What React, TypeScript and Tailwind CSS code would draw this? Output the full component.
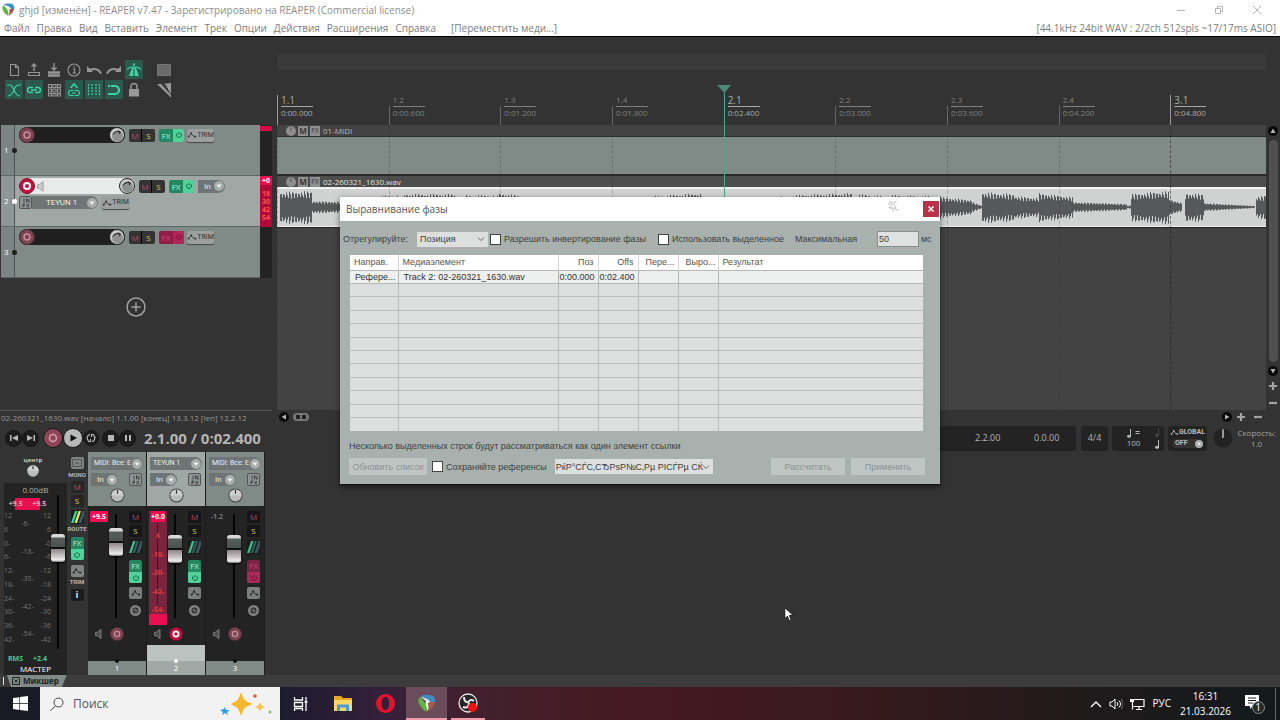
import type { ReactNode } from "react";

const ui = "font-['Open_Sans','Noto_Sans',sans-serif]";

function ReaperLogo({ className }: { className: string }) {
  return (
    <svg viewBox="0 0 20 20" className={className} aria-hidden="true">
      <path d="M2.500 3C5 0 15 0 17.500 3c2 2.500 2 5 1 7L13 8.500C11 5 7 3.500 2.500 3z" fill="#3f8fc4" />
      <path d="M2 3.500C-.5 6 .5 10 2.500 13c2 3 4 5.500 7 6.500L11 15C9 11 6 7 2 3.500z" fill="#5cb83c" />
      <path d="M18.500 9C18 13 15 17.500 10.500 19.500L11.500 9z" fill="#a55a4c" />
      <path d="M2.500 3.200C7 4 11 5 13.500 8.500L10.800 10.500C12 13 12 16 10.500 19 10 14 7.500 11 9 8 7.500 6 5 4.800 2.500 3.200z" fill="#f4f4f2" />
    </svg>
  );
}

const menuItems = ["Файл", "Правка", "Вид", "Вставить", "Элемент", "Трек", "Опции", "Действия", "Расширения", "Справка"];

function TitleBar() {
  return (
    <header className="border-b border-black bg-white text-[#8d8d8d]">
      <div className="flex h-[19px] items-center gap-1 pr-1 pl-[2px]">
        <ReaperLogo className="size-[13px]" />
        <h1 className="flex-1 text-[10px] leading-4 whitespace-nowrap">
          ghjd [изменён] - REAPER v7.47 - Зарегистрировано на REAPER (Commercial license)
        </h1>
        <div className="flex gap-7 pr-[14px] text-[#b5b5b5]">
          <button aria-label="Свернуть">
            <svg viewBox="0 0 10 10" className="size-[10px]" stroke="currentColor"><path d="M1 5.500h8" /></svg>
          </button>
          <button aria-label="Развернуть">
            <svg viewBox="0 0 10 10" className="size-[10px]" stroke="currentColor" fill="none"><path d="M1.500 3.500h5v5h-5zM3.500 3.500v-2h5v5h-2" /></svg>
          </button>
          <button aria-label="Закрыть">
            <svg viewBox="0 0 10 10" className="size-[10px]" stroke="currentColor"><path d="M1 1l8 8M9 1L1 9" /></svg>
          </button>
        </div>
      </div>
      <nav className="flex h-[17px] items-center gap-[7px] px-1 text-[10px] leading-4 whitespace-nowrap text-[#7d7d7d]">
        {menuItems.map((m) => (
          <button key={m}>{m}</button>
        ))}
        <button className="ml-2">[Переместить меди...]</button>
        <span className="ml-auto">[44.1kHz 24bit WAV : 2/2ch 512spls ~17/17ms ASIO]</span>
      </nav>
    </header>
  );
}

type Tool = { label: string; on?: boolean; draw: ReactNode };

const toolRow1: Tool[] = [
  { label: "Новый проект", draw: <path d="M5.500 3.500h5l3 3v8h-8zM10.500 3.500v3h3" /> },
  { label: "Открыть проект", draw: <><path d="M9 10V3M6.500 5.500L9 3l2.500 2.500" strokeWidth="1.400" /><path d="M3.500 11.500h11v3h-11z" /></> },
  { label: "Сохранить проект", draw: <><path d="M9 2v7M6.500 6.500L9 9l2.500-2.500" strokeWidth="1.400" /><path d="M3 11.500h12M3 14.500h12" strokeWidth="2.400" /></> },
  { label: "Свойства", draw: <><circle cx="9" cy="9" r="6" /><path d="M8 8h1.500v4M7.500 12h3.500M9 5v1.500" /></> },
  { label: "Отменить", draw: <><path d="M16 12.500C14 8 9 7 5 9" strokeWidth="2.200" /><path d="M2 5v6h6z" fill="currentColor" stroke="none" /></> },
  { label: "Повторить", draw: <><path d="M2 12.500C4 8 9 7 13 9" strokeWidth="2.200" /><path d="M16 5v6h-6z" fill="currentColor" stroke="none" /></> },
  { label: "Метроном", on: true, draw: <><path d="M2 8.500C5 5 13 5 16 8.500" /><path d="M7 7h4l3 8H4z" fill="currentColor" stroke="none" /><path d="M9 2.500v2" strokeWidth="2" /><path d="M9 8v7" stroke="#2a5a4a" /></> },
];

const toolRow2: Tool[] = [
  { label: "Автокроссфейд", on: true, draw: <path d="M2 4h3c5 1 3 10 10 11M16 4h-3C8 5 10 14 3 15" /> },
  { label: "Группировка", on: true, draw: <path d="M8 6.500H5a2.500 2.500 0 000 5h3M10 6.500h3a2.500 2.500 0 010 5h-3M6 9h6" strokeWidth="1.400" /> },
  { label: "Сетка", draw: <path d="M3.500 3.500h3v3h-3zM8 3.500h3v3H8zM12.500 3.500h3v3h-3zM3.500 8h3v3h-3zM8 8h3v3H8zM12.500 8h3v3h-3zM3.500 12.500h3v2.500h-3zM8 12.500h3v2.500H8zM12.500 12.500h3v2.500h-3z" /> },
  { label: "Огибающие", on: true, draw: <><path d="M5.500 7L9 3l3.500 4" strokeWidth="1.600" /><path d="M8.500 9.500H6a2 2 0 000 5h2.500M9.500 9.500H12a2 2 0 010 5H9.500M7 12h4" /></> },
  { label: "Линии сетки", on: true, draw: <path d="M3.500 3v12M7 3v12M11 3v12M14.500 3v12" strokeDasharray="2 1" /> },
  { label: "Привязка", on: true, draw: <path d="M3 5h7a4 4 0 010 8H3" strokeWidth="2.200" strokeDasharray="2 1 30" /> },
  { label: "Блокировка", draw: <><path d="M4.500 8.500h9v6.500h-9z" fill="currentColor" /><path d="M6 8V5.500a3 3 0 016 0V8" strokeWidth="1.500" /></> },
];

function ToolButton({ tool }: { tool: Tool }) {
  return (
    <button
      aria-label={tool.label}
      className={`flex h-[19px] w-[18px] items-center justify-center ${tool.on ? "bg-[#2b594b] text-[#3fd3a0]" : "text-[#979797]"}`}
    >
      <svg viewBox="0 0 18 18" className="size-[18px]" fill="none" stroke="currentColor" strokeWidth="1.100">{tool.draw}</svg>
    </button>
  );
}

function Toolbar() {
  return (
    <div className="grid h-[88px] content-start gap-px pt-[23px] pl-[5px]">
      <div className="flex gap-[2px]">
        {toolRow1.map((t) => <ToolButton key={t.label} tool={t} />)}
        <button aria-label="Выделение" className="ml-[10px] flex h-[19px] w-[18px] items-center justify-center">
          <svg viewBox="0 0 14 12" className="h-3 w-[14px]"><path d="M.5.5h13v11H.5z" fill="#6a6a6a" stroke="#9a9a9a" strokeDasharray="1 1" /></svg>
        </button>
      </div>
      <div className="flex gap-[2px]">
        {toolRow2.map((t) => <ToolButton key={t.label} tool={t} />)}
        <button aria-label="Фейды" className="ml-[10px] flex h-[19px] w-[18px] items-center justify-center">
          <svg viewBox="0 0 16 16" className="size-4" fill="#9a9a9a"><path d="M1 2h4l10 11v2.500z" /><path d="M7 2h2v1.500l1.500-.5v3l1.500-.5v3l1.500-.5v3L15 11V1z" /></svg>
        </button>
      </div>
    </div>
  );
}

function RecordButton({ armed, size = "size-4" }: { armed?: boolean; size?: string }) {
  return (
    <button aria-label="Запись" className={`${size} shrink-0`}>
      <svg viewBox="0 0 16 16" className="size-full">
        <circle cx="8" cy="8" r="7.500" fill={armed ? "#c4123f" : "#7d4552"} stroke={armed ? "#7c0c2a" : "#4a2f36"} />
        <circle cx="8" cy="8" r="3" fill="none" stroke={armed ? "#fff" : "#c48e99"} strokeWidth={armed ? 2 : 1.500} />
      </svg>
    </button>
  );
}

function Knob({ size = "size-4", dark }: { size?: string; dark?: boolean }) {
  return (
    <button aria-label="Регулятор" className={`${size} shrink-0`}>
      <svg viewBox="0 0 16 16" className="size-full">
        <circle cx="8" cy="8" r="7.500" fill={dark ? "#222" : "#3a3d3c"} />
        {dark ? (
          <path d="M8 1v7" stroke="#ddd" />
        ) : (
          <>
            <circle cx="8" cy="8" r="6.500" fill="#b9bcbb" />
            <path d="M8 1.500a6.500 6.500 0 016.500 6.500h-13A6.500 6.500 0 018 1.500z" fill="#cfd1d0" />
            <path d="M8 2v4" stroke="#333" strokeWidth="1.300" />
          </>
        )}
      </svg>
    </button>
  );
}

function ArcKnob() {
  return (
    <button aria-label="Громкость" className="size-4 shrink-0">
      <svg viewBox="0 0 16 16" className="size-full">
        <circle cx="8" cy="8" r="7.500" fill="#c9cbca" stroke="#222" />
        <circle cx="8.500" cy="9" r="5.500" fill="#8e9190" />
        <path d="M4 7.500C5 5 8 4 11 5M9 3.800l2.500 1.200L10 7" stroke="#1f1f1f" fill="none" />
      </svg>
    </button>
  );
}

function MuteSolo() {
  return (
    <div className="flex h-[13px] overflow-hidden rounded-[2px] bg-[#333] text-[8px] leading-[13px]">
      <button aria-label="Mute" className="w-[13px] border-r border-black text-[#b05068]">M</button>
      <button aria-label="Solo" className="w-[13px] text-[#cfd060]">S</button>
    </div>
  );
}

function FxPair({ off }: { off?: boolean }) {
  return (
    <div className={`flex h-[13px] overflow-hidden rounded-[2px] text-[8px] leading-[13px] ${off ? "bg-[#8f1f49] text-[#d04a78]" : "bg-[#23875f] text-[#bdf0d8]"}`}>
      <button className="w-[14px]">FX</button>
      <button aria-label="Питание FX" className={`flex w-[11px] items-center justify-center ${off ? "bg-[#b32458]" : "bg-[#4fd39a]"}`}>
        <PowerIcon off={off} />
      </button>
    </div>
  );
}

function PowerIcon({ off }: { off?: boolean }) {
  return (
    <svg viewBox="0 0 8 8" className="size-2" fill="none" stroke={off ? "#7a1038" : "#146a46"}>
      <path d="M2.200 2.200a2.500 2.500 0 103.600 0M4 1v2.500" />
    </svg>
  );
}

function EnvelopeGlyph({ className }: { className: string }) {
  return (
    <svg viewBox="0 0 12 8" className={className} fill="none" stroke="currentColor">
      <path d="M2 6l3-4 2 3 3 1" />
      <path d="M1 5h2v2H1zM4 1h2v2H4zM9 5h2v2H9z" fill="currentColor" stroke="none" />
    </svg>
  );
}

function TrimButton() {
  return (
    <button className="flex h-[13px] w-[27px] items-center justify-center rounded-[2px] bg-[#9b9f9e] font-['Roboto',sans-serif] text-[7px] leading-[13px] text-[#333] shadow-[0_1px_1px_#444]">
      <EnvelopeGlyph className="h-2 w-[10px] shrink-0" />
      TRIM
    </button>
  );
}

function Chevron({ size = "size-[10px]" }: { size?: string }) {
  return (
    <svg viewBox="0 0 10 10" className={`${size} shrink-0`}>
      <circle cx="5" cy="5" r="5" fill="#a9adac" />
      <path d="M2.500 3.500h5L5 7z" fill="#f3f3f3" />
    </svg>
  );
}

function InFxButton() {
  return (
    <button aria-label="Входные FX" className="grid size-[13px] shrink-0 place-items-center rounded-[2px] border border-[#555] bg-[#8f9594] text-[#333]">
      <svg viewBox="0 0 10 10" className="size-[10px]" fill="none" stroke="currentColor" strokeWidth=".8">
        <path d="M3 .5v4M5.500 4.500v-4l2.500 4v-4M2 9.500V6h2M2 7.500h2M5.500 6l2.500 3.500M8 6L5.500 9.500" />
      </svg>
    </button>
  );
}

function PillSelect({ text, className }: { text: string; className: string }) {
  return (
    <button className={`flex h-[13px] items-center justify-between rounded-l-[2px] rounded-r-full bg-[#6f7574] pr-px font-['Roboto',sans-serif] leading-[13px] text-[#ededed] ${className}`}>
      <span className="whitespace-nowrap">{text}</span>
      <Chevron />
    </button>
  );
}

function Speaker({ className }: { className: string }) {
  return (
    <svg viewBox="0 0 8 12" className={className} fill="none" stroke="currentColor">
      <path d="M.5 4h2L7 .5v11L2.500 8h-2z" fill="currentColor" fillOpacity=".4" />
    </svg>
  );
}

function TrackPanel({ n, selected, fxOff }: { n: number; selected?: boolean; fxOff?: boolean }) {
  return (
    <div className="flex h-[51px]">
      <div className={`flex flex-1 border-b border-[#5d6664] ${selected ? "bg-[#a0a8a6]" : "bg-[#808b88]"}`}>
        <div className={`relative flex w-[14px] items-center border-r border-[#4e5654] pl-[3px] text-[8px] text-white ${selected ? "bg-[#8e9795]" : "bg-[#7b8583]"}`}>
          {n}
          <span className={`absolute -right-[3px] size-[5px] rounded-full ${selected ? "bg-white" : "bg-[#1d1d1d]"}`} />
        </div>
        <div className="flex flex-col gap-[2px] pt-[2px] pl-1">
          <div className="flex items-center">
            <div className={`mr-1 flex h-4 items-center rounded-full ${selected ? "w-[116px] bg-[#e9ebea]" : "w-[106px] bg-[#1f1f1f]"}`}>
              <RecordButton armed={selected} />
              {selected && <Speaker className="ml-[2px] h-[11px] w-[7px] text-[#9a9a9a]" />}
              <input aria-label={`Имя дорожки ${n}`} className="w-full min-w-0 flex-1 bg-transparent text-[8px] outline-none" />
              <ArcKnob />
            </div>
            <MuteSolo />
            <div className="ml-1"><FxPair off={fxOff} /></div>
            {selected ? <PillSelect text="In" className="ml-1 w-[27px] pl-[6px] text-[8px]" /> : <div className="ml-[3px]"><TrimButton /></div>}
          </div>
          {selected && (
            <div className="flex">
              <InFxButton />
              <PillSelect text="TEYUN 1" className="mr-1 w-[66px] pl-[14px] text-[8px]" />
              <TrimButton />
            </div>
          )}
        </div>
      </div>
      {selected ? (
        <div className="flex w-3 flex-col items-center bg-[#b00a38] text-[7px] leading-[8px] font-bold text-[#ff5648]">
          <span className="mb-[5px] w-full bg-[#e80f50] pt-px text-center text-white">+0</span>
          <span>18</span><span>30</span><span>42</span><span>54</span>
        </div>
      ) : (
        <div className="w-3 bg-[#232323]">{n === 1 && <div className="mt-px h-[5px] bg-[#d80a45]" />}</div>
      )}
    </div>
  );
}

const marks = [
  ["1.1", "0:00.000"], ["1.2", "0:00.600"], ["1.3", "0:01.200"], ["1.4", "0:01.800"], ["2.1", "0:02.400"],
  ["2.2", "0:03.000"], ["2.3", "0:03.600"], ["2.4", "0:04.200"], ["3.1", "0:04.800"],
];

function Ruler() {
  return (
    <div className="grid h-[30px] grid-cols-[repeat(8,7fr)_6fr] items-end">
      {marks.map(([beat, time]) => {
        const bar = beat.endsWith(".1");
        return (
          <div key={beat} className={`min-w-0 border-l pl-[3px] ${bar ? "h-[30px] border-[#999] text-[#a8a8a8]" : "h-[19px] border-[#666] text-[#808080]"}`}>
            <div className={`flex w-8 flex-col ${bar ? "-mt-px" : "-mt-3"}`}>
              <span className={`h-[13px] border-b border-current leading-[12px] ${bar ? "text-[10px]" : "text-[8px]"}`}>{beat}</span>
              <span className="text-[8px] leading-[11px] whitespace-nowrap">{time}</span>
            </div>
          </div>
        );
      })}
    </div>
  );
}

const bursts: [number, number, number, number][] = [
  [3, 35, 15, 16], [35, 72, 6, 5], [103, 121, 11, 12], [127, 178, 13, 13], [189, 218, 12, 12], [220, 249, 14, 11],
  [374, 391, 11, 12], [393, 425, 12, 14], [498, 507, 11, 11], [515, 575, 12, 14], [582, 607, 13, 11], [614, 665, 12, 11],
  [663, 695, 10, 7], [695, 705, 5, 1], [705, 738, 15, 13], [738, 762, 11, 9], [762, 796, 14, 10], [796, 850, 5, 3],
  [850, 854, 1, 2], [854, 875, 13, 15], [875, 892, 15, 16], [892, 905, 8, 4], [908, 927, 14, 13], [927, 978, 4, 1], [979, 989, 10, 12],
];

function wavePath() {
  let d = "";
  for (const [from, to, a, b] of bursts) {
    for (let x = from; x < to; x += 1) {
      const t = (x - from) / (to - from);
      const amp = a + (b - a) * t;
      const high = x % 3 === 0 ? 1 : x % 3 === 1 ? 0.9 : 0.65;
      const jitter = 0.92 + 0.08 * Math.sin(x * 1.7);
      const up = Math.max(0.5, amp * high * jitter);
      d += `M${x + 0.5} ${(18 - up).toFixed(1)}V${(18 + up * 1.1).toFixed(1)}`;
    }
  }
  return d;
}

function LaneHeader({ text, selected }: { text: string; selected?: boolean }) {
  return (
    <div className={`flex h-[11px] items-center gap-px pl-[9px] text-[8px] leading-[11px] ${selected ? "bg-[#4d4d4d] text-[#e2e2e2]" : "bg-[#434343] text-[#b8b8b8]"}`}>
      <svg viewBox="0 0 10 10" className="size-[10px]"><circle cx="5" cy="5" r="5" fill="#8f8f8f" /><path d="M5 1v4" stroke="#555" /></svg>
      <button aria-label="Mute элемента" className="ml-px h-[10px] w-[10px] bg-[#8f8f8f] text-[8px] leading-[10px] font-bold text-[#3a3a3a]">M</button>
      <button aria-label="FX элемента" className="ml-px h-[10px] w-[10px] bg-[#8f8f8f] text-[7px] leading-[10px] text-[#3a3a3a]">FX</button>
      <span className="pl-[2px]">{text}</span>
    </div>
  );
}

function Arrange() {
  return (
    <div className="flex min-w-0 flex-1 flex-col">
      <div className="mt-[17px] h-4 bg-[#3a3a3a]" />
      <div className="h-[25px]" />
      <div className="relative flex flex-1 flex-col">
        <Ruler />
        <div className="flex flex-1 flex-col bg-[#434343]">
          <LaneHeader text="01-MIDI" />
          <div className="h-[38px] border-t border-[#2d2d2d] bg-[#808b88]" />
          <div className="h-[2px] bg-[#2b2b2b]" />
          <LaneHeader text="02-260321_1630.wav" selected />
          <div className="h-10 border-t-2 border-b border-[#f2f2f2] bg-[#d0d2d1]">
            <svg viewBox="0 0 989 37" preserveAspectRatio="none" className="h-full w-full">
              <path d={wavePath()} stroke="#565959" fill="none" />
            </svg>
          </div>
          <div className="h-px bg-[#222]" />
        </div>
        <div className="pointer-events-none absolute inset-x-0 top-[30px] bottom-0 grid grid-cols-[repeat(8,7fr)_6fr]">
          {marks.map(([beat]) => (
            <div key={beat} className={`min-w-0 border-l border-dashed ${beat === "3.1" ? "border-[#222]/60" : "border-[#333]/30"}`} />
          ))}
        </div>
        <div className="pointer-events-none absolute inset-x-0 -top-[10px] grid h-[119px] grid-cols-[repeat(8,7fr)_6fr]">
          <div className="relative col-start-5 border-l border-[#4fa58d]">
            <svg viewBox="0 0 14 8" className="absolute top-0 -left-[8px] h-2 w-[14px]"><path d="M0 0h14L7.500 8z" fill="#4a8a77" /></svg>
          </div>
        </div>
      </div>
    </div>
  );
}

function RoundArrow({ turn }: { turn: string }) {
  return (
    <svg viewBox="0 0 10 10" className={`size-[10px] shrink-0 ${turn}`}>
      <circle cx="5" cy="5" r="5" fill="#080808" />
      <path d="M5 2.500L7.500 7h-5z" fill="#b5b5b5" />
    </svg>
  );
}

function Sign({ plus }: { plus?: boolean }) {
  return (
    <svg viewBox="0 0 8 8" className="size-2" stroke="#a3a3a3" strokeWidth="2.200">
      <path d={plus ? "M0 4h8M4 0v8" : "M0 4h8"} />
    </svg>
  );
}

function VScroll() {
  return (
    <div className="flex w-[14px] flex-col items-center pt-[89px] pb-[3px]">
      <button aria-label="Вверх" className="flex"><RoundArrow turn="" /></button>
      <div className="mt-1 w-[9px] flex-1 rounded-full bg-[#505050]" />
      <button aria-label="Вниз" className="mt-1 flex"><RoundArrow turn="rotate-180" /></button>
      <button aria-label="Увеличить по вертикали" className="mt-[6px] flex"><Sign plus /></button>
      <button aria-label="Уменьшить по вертикали" className="mt-[9px] flex"><Sign /></button>
    </div>
  );
}

function RoundBtn({ label, children, tone = "bg-[#1d1d1d]", size = "size-[17px]" }: { label: string; children: ReactNode; tone?: string; size?: string }) {
  return (
    <button aria-label={label} className={`grid shrink-0 place-items-center rounded-full border border-[#161616] ${size} ${tone}`}>
      <svg viewBox="0 0 10 10" className="size-[10px]" fill="#b8b8b8">{children}</svg>
    </button>
  );
}

function Transport() {
  return (
    <div className="flex h-[28px] items-center">
      <div className="flex w-[340px] items-center pl-[5px]">
        <RoundBtn label="В начало"><path d="M1 2h1.500v6H1zM9 2v6L3 5z" /></RoundBtn>
        <RoundBtn label="В конец"><path d="M7.500 2H9v6H7.500zM1 2v6l6-3z" /></RoundBtn>
        <div className="flex items-center pl-1">
          <RoundBtn label="Запись" tone="bg-[#8f4558]" size="size-5"><circle cx="5" cy="5" r="3.500" fill="none" stroke="#d79aa8" strokeWidth="1.600" /></RoundBtn>
          <RoundBtn label="Воспроизведение" tone="bg-[#b9b9b9]" size="size-5"><path d="M2.500 1.500v7L9 5z" fill="#111" /></RoundBtn>
          <RoundBtn label="Повтор" size="size-4"><path d="M2.500 8A4 4 0 014 1.200M7.500 2A4 4 0 016 8.800M2 8.500h2.500V6M8 1.500H5.500V4" fill="none" stroke="#b8b8b8" strokeWidth="1.200" /></RoundBtn>
        </div>
        <div className="flex pl-[3px]">
          <RoundBtn label="Стоп"><path d="M2 2h6v6H2z" /></RoundBtn>
          <RoundBtn label="Пауза"><path d="M2 2h2v6H2zM6 2h2v6H6z" /></RoundBtn>
        </div>
        <output className="pl-2 text-[15px] leading-5 font-bold whitespace-nowrap text-[#b4b4b4]">2.1.00 / 0:02.400</output>
      </div>
      <div className="flex h-[25px] flex-1 items-center justify-end rounded-[2px] bg-[#232323] text-[9px] text-[#b5b5b5]">
        <span className="w-[59px]">2.2.00</span>
        <span className="w-[42px]">0.0.00</span>
      </div>
      <button className="ml-[5px] h-[25px] w-[27px] rounded-[3px] bg-[#232323] text-[9px] text-[#b5b5b5]">4/4</button>
      <div className="ml-1 flex h-[25px] w-[52px] items-center rounded-[3px] bg-[#232323] text-[8px] text-[#b5b5b5]">
        <div className="flex flex-1 flex-col items-center leading-[10px]">
          <span className="flex items-center gap-[3px] font-bold"><Note /> =</span>
          <span>100</span>
        </div>
        <div className="flex flex-col items-center gap-[3px] pr-1">
          <span className="text-[#444]"><Note /></span>
          <Note />
        </div>
      </div>
      <div className="ml-1 flex h-[25px] w-[39px] flex-col items-center justify-center rounded-[3px] bg-[#232323] font-['Roboto',sans-serif] text-[7px] leading-[9px] font-bold text-[#bcbcbc]">
        <span className="flex items-center"><EnvelopeGlyph className="h-[7px] w-[9px]" />GLOBAL</span>
        <button className="mt-[2px] flex w-[31px] items-center justify-between rounded-full bg-[#333] pl-[3px]">OFF<Chevron size="size-2" /></button>
      </div>
      <div className="ml-[6px] flex"><Knob size="size-5" dark /></div>
      <div className="w-[47px] text-center text-[8px] leading-[11px] text-[#a5a5a5]">
        <div>Скорость:</div>
        <div>1.0</div>
      </div>
    </div>
  );
}

function Note() {
  return (
    <svg viewBox="0 0 5 9" className="h-[9px] w-[5px]" fill="currentColor"><ellipse cx="2" cy="7.300" rx="2" ry="1.500" /><path d="M3 0h1v7.500H3z" /></svg>
  );
}

const faderStyle =
  "appearance-none bg-[linear-gradient(90deg,transparent_6px,#050505_6px,#050505_8px,transparent_8px)] [writing-mode:vertical-lr] [direction:rtl] [&::-webkit-slider-thumb]:h-7 [&::-webkit-slider-thumb]:w-[14px] [&::-webkit-slider-thumb]:appearance-none [&::-webkit-slider-thumb]:rounded-[3px] [&::-webkit-slider-thumb]:bg-[linear-gradient(180deg,#dedede_0px,#d6d6d6_3px,#555e5b_4px,#4a5350_13px,#101010_13px,#101010_15px,#8c8689_15px,#c9c4c6_22px,#ededed_26px,#777_28px)] [&::-webkit-slider-thumb]:shadow-[0_1px_2px_#000]";

function Fader({ label, value, height }: { label: string; value: number; height: string }) {
  return <input type="range" min={0} max={100} defaultValue={value} aria-label={label} className={`w-[14px] ${height} ${faderStyle}`} />;
}

function RouteIcon({ bright }: { bright?: boolean }) {
  return (
    <svg viewBox="0 0 13 14" className="h-[14px] w-[13px]">
      <path d="M0 0h13v14H0z" fill="#1b1b1b" />
      <path d="M0 13L4 1h2.500L2.500 13z" fill={bright ? "#34d6a0" : "#45b98c"} />
      <path d="M3.500 13l4-12H10L6 13z" fill={bright ? "#f0e44a" : "#2f6152"} />
      <path d="M7.500 13l4-12H13v4l-2.500 8z" fill={bright ? "#3d5a6e" : "#3b5563"} />
    </svg>
  );
}

function SmallButton({ label, children, tone }: { label: string; children: ReactNode; tone: string }) {
  return (
    <button aria-label={label} className={`grid h-3 w-[13px] place-items-center rounded-[2px] text-[8px] leading-3 ${tone}`}>
      {children}
    </button>
  );
}

function FxStack({ off }: { off?: boolean }) {
  return (
    <div className={`w-[13px] overflow-hidden rounded-[2px] text-center text-[8px] ${off ? "bg-[#7c2345] text-[#c04a74]" : "bg-[#23875f] text-[#bdf0d8]"}`}>
      <button className="block h-3 w-full leading-3">FX</button>
      <button aria-label="Питание FX" className={`grid h-[11px] w-full place-items-center ${off ? "bg-[#a82a59]" : "bg-[#4fd39a]"}`}><PowerIcon off={off} /></button>
    </div>
  );
}

const scaleSide = ["12", "6", "0", "6", "12", "18", "24", "30", "36", "42"];
const scaleMid = ["-6-", "-18-", "-30-", "-42-", "-54-"];
const caption = "font-['Roboto',sans-serif] text-[6px] leading-[7px] font-bold text-[#b5b5b5]";

function Master() {
  return (
    <section className="flex w-[84px] gap-[3px] pl-1" aria-label="Мастер">
      <div className="flex w-[63px] flex-col">
        <div className="flex h-[31px] flex-col items-center pt-[5px] pr-[5px]">
          <span className="text-[6px] leading-[7px] font-bold text-[#c8c8c8]">центр</span>
          <Knob size="size-[14px]" />
        </div>
        <div className="flex flex-1 flex-col bg-[#232323]">
          <div className="pt-[2px] text-center text-[8px] leading-[10px] text-[#b0b0b0]">0.00dB</div>
          <div className="flex flex-1">
            <div className="flex w-[47px] flex-col">
              <div className="mt-[3px] grid h-3 grid-cols-2 bg-[linear-gradient(90deg,transparent_11px,#e80f50_11px,#e80f50_36px,transparent_36px)] text-center text-[7px] leading-3 font-bold text-[#e8a8b8]">
                <span>+9.5</span><span>+9.5</span>
              </div>
              <div className="flex justify-between pt-[2px] text-[7px] leading-[8px] text-[#757575]">
                <div className="flex h-[132px] flex-col justify-between">{scaleSide.map((v, i) => <span key={i}>{i > 1 ? `${v}-` : v}</span>)}</div>
                <div className="flex h-[126px] flex-col justify-between pt-2">{scaleMid.map((v) => <span key={v}>{v}</span>)}</div>
                <div className="flex h-[132px] flex-col justify-between text-right">{scaleSide.map((v, i) => <span key={i}>{i > 1 ? `-${v}` : v}</span>)}</div>
              </div>
            </div>
            <Fader label="Громкость мастера" value={69} height="h-[154px]" />
          </div>
          <div className="flex justify-between pr-5 pl-1 text-[7px] leading-[9px] font-bold text-[#4fc792]"><span>RMS</span><span>+2.4</span></div>
          <div className="pb-[1px] text-center text-[8px] leading-[11px] text-white">МАСТЕР</div>
        </div>
      </div>
      <div className="flex w-[14px] flex-col items-center pt-[5px]">
        <SmallButton label="Моно" tone="bg-[#808483] text-[#555]"><svg viewBox="0 0 10 8" className="h-2 w-[10px]" fill="none" stroke="currentColor"><path d="M.5.5h9v7h-9zM3 4h4" /></svg></SmallButton>
        <span className={`pt-[2px] pb-[3px] ${caption}`}>MONO</span>
        <SmallButton label="Mute" tone="bg-[#262626] text-[#c04a60]">M</SmallButton>
        <span className="h-[2px]" />
        <SmallButton label="Solo" tone="bg-[#262626] text-[#d8d850]">S</SmallButton>
        <span className="h-[3px]" />
        <button aria-label="Маршрутизация" className="flex"><RouteIcon bright /></button>
        <span className={`pt-px pb-[5px] ${caption}`}>ROUTE</span>
        <FxStack />
        <span className="h-[5px]" />
        <SmallButton label="Огибающие" tone="bg-[#808483] text-[#222]"><EnvelopeGlyph className="h-2 w-[10px]" /></SmallButton>
        <span className={`pt-px pb-1 ${caption}`}>TRIM</span>
        <SmallButton label="Сведения" tone="bg-[#1c1c1c] text-white font-bold">i</SmallButton>
      </div>
    </section>
  );
}

type StripData = { n: number; input: string; peak: string; value: number; selected?: boolean; fxOff?: boolean };

const strips: StripData[] = [
  { n: 1, input: "MIDI: Все: Е", peak: "+9.5", value: 82 },
  { n: 2, input: "TEYUN 1", peak: "+0.0", value: 73, selected: true },
  { n: 3, input: "MIDI: Все: Е", peak: "-1.2", value: 73, fxOff: true },
];

function Strip({ s }: { s: StripData }) {
  const tone = s.selected ? "bg-[#a0a8a6]" : "bg-[#808b88]";
  return (
    <section aria-label={`Канал ${s.n}`} className="flex flex-1 flex-col border-r border-[#1b1b1b]">
      <div className={`flex h-[54px] flex-col gap-[3px] px-[3px] pt-[5px] ${tone}`}>
        <PillSelect text={s.input} className="w-[52px] pl-[3px] text-[7px]" />
        <div className="flex justify-between pr-[1px]">
          <PillSelect text="In" className="w-[27px] pl-[6px] text-[8px]" />
          <InFxButton />
        </div>
        <div className="-mt-px flex justify-center"><Knob size="size-[15px]" /></div>
      </div>
      <div className="flex h-[119px] bg-[#232323] pt-[5px]">
        <div className="w-[20px] pl-[2px]">
          {s.selected ? (
            <div className="flex h-[114px] flex-col items-center justify-between bg-[linear-gradient(90deg,#7c2340_8px,#3c1422_8px,#3c1422_9px,#7c2340_9px)] text-[7px] font-bold text-[#e03a3a]">
              <span className="bg-[#ee0f52] text-[7px] leading-[11px] text-white">+0.0</span>
              <span className="leading-[9px]">6</span><span className="leading-[9px]">-18-</span><span className="leading-[9px]">-30-</span><span className="leading-[9px]">-42-</span>
              <span className="h-5 w-full bg-[linear-gradient(180deg,#7c2340_9px,#e80f50_9px)] text-center leading-[9px]">-54-</span>
            </div>
          ) : (
            <div className={`text-center text-[7px] leading-[11px] font-bold ${s.n === 1 ? "bg-[#ee0f52] text-white" : "text-[#777]"}`}>{s.peak}</div>
          )}
        </div>
        <div className="flex flex-1 pt-[3px] pl-px">
          <Fader label={`Громкость ${s.n}`} value={s.value} height="h-[104px]" />
        </div>
        <div className="flex w-[17px] flex-col items-start">
          <SmallButton label="Mute" tone="bg-[#161616] text-[#b04a60]">M</SmallButton>
          <span className="h-[2px]" />
          <SmallButton label="Solo" tone="bg-[#161616] text-[#cfcf58]">S</SmallButton>
          <span className="h-[3px]" />
          <button aria-label="Маршрутизация" className="flex"><RouteIcon /></button>
          <span className="h-[6px]" />
          <FxStack off={s.fxOff} />
          <span className="h-1" />
          <SmallButton label="Огибающие" tone="bg-[#7c7f7e] text-[#222]"><EnvelopeGlyph className="h-2 w-[10px]" /></SmallButton>
          <span className="h-[6px]" />
          <button aria-label="Фаза" className="ml-[1px] flex">
            <svg viewBox="0 0 10 10" className="size-[11px]"><circle cx="5" cy="5" r="5" fill="#808080" /><circle cx="5" cy="5" r="2.200" fill="none" stroke="#333" /><path d="M3 7l4-4" stroke="#333" /></svg>
          </button>
        </div>
      </div>
      <div className="flex h-5 items-start gap-2 bg-[#232323] pt-[2px] pl-[7px] text-[#8a8a8a]">
        <Speaker className="mt-[2px] h-[10px] w-[7px]" />
        <RecordButton armed={s.selected} size="size-[14px]" />
      </div>
      <div className={`h-4 ${s.selected ? "bg-[#bcc2c0]" : "bg-[#232323]"}`} />
      <div className={`relative h-[14px] text-center text-[8px] leading-[14px] text-white ${tone}`}>
        {s.n}
        <span className={`absolute -top-[2px] left-1/2 size-1 -translate-x-1/2 rounded-full ${s.selected ? "bg-white" : "bg-[#111]"}`} />
      </div>
    </section>
  );
}

function Taskbar() {
  const cell = "grid w-[42px] place-items-center";
  return (
    <footer className="flex h-[33px] items-stretch bg-[linear-gradient(90deg,#191a24_0%,#1c1b2d_22%,#35203a_30%,#43202e_37%,#45191f_50%,#3a1a1c_65%,#1f1a1b_85%,#131a1c_100%)] text-white">
      <button aria-label="Пуск" className="grid w-10 place-items-center">
        <svg viewBox="0 0 16 16" className="size-[15px]" fill="#fff"><path d="M0 2.200l6.800-1v6.400H0zM7.500 1.100L16 0v7.600H7.500zM0 8.400h6.800v6.400l-6.800-1zM7.500 8.400H16V16l-8.500-1.100z" /></svg>
      </button>
      <label className="flex w-[240px] items-center bg-[#f2f2f2] pl-[10px] text-[#444]">
        <svg viewBox="0 0 14 14" className="size-[14px] shrink-0" fill="none" stroke="currentColor"><circle cx="8.500" cy="5.500" r="4.500" /><path d="M5.500 9L.5 13.500" /></svg>
        <input aria-label="Поиск" placeholder="Поиск" className="ml-[9px] w-full min-w-0 flex-1 bg-transparent text-[12px] outline-none placeholder:text-[#555]" />
        <svg viewBox="0 0 54 24" className="mr-2 h-6 w-[54px] shrink-0">
          <path d="M23 2c1.500 6 3.500 8 10 10-6.500 2-8.500 4-10 10-1.500-6-3.500-8-9-10 5.500-2 7.500-4 9-10z" fill="#f5b82e" stroke="#f5b82e" strokeLinejoin="round" strokeWidth="1.500" />
          <path d="M42 10c.8 3 2 4 5 5-3 1-4.200 2-5 5-.8-3-2-4-5-5 3-1 4.200-2 5-5z" fill="#f7c64c" />
          <path d="M7 15l1 3 4 0-3 2 1 3-3-2-3 2 1-3-3-2 4-1z" fill="#2f9be0" />
          <circle cx="37" cy="4" r="1.800" fill="#e0533a" /><circle cx="52" cy="20" r="1.500" fill="#8cbf4d" />
        </svg>
      </label>
      <button aria-label="Представление задач" className={cell}>
        <svg viewBox="0 0 16 14" className="h-[14px] w-4" fill="none" stroke="#fff" strokeWidth="1.300"><path d="M1.500 0v3h8V0M1.500 5.500h8v4h-8zM1.500 14v-2.500h8V14M13 0v14M11.500 5h3" /></svg>
      </button>
      <button aria-label="Проводник" className={cell}>
        <svg viewBox="0 0 20 17" className="h-[17px] w-5"><path d="M1 1h7l2 2h9v13H1z" fill="#e9a825" /><path d="M1 5h18v11H1z" fill="#fbd768" /><path d="M4 16V9.500h12V16h-3v-3.500H7V16z" fill="#4a9ddb" /></svg>
      </button>
      <button aria-label="Opera" className={cell}>
        <svg viewBox="0 0 20 20" className="size-[19px]"><path fillRule="evenodd" d="M10 0a10 10 0 100 20 10 10 0 000-20zm0 3c2.500 0 4 3 4 7s-1.500 7-4 7-4-3-4-7 1.500-7 4-7z" fill="#e0142d" /></svg>
      </button>
      <button aria-label="REAPER" className="grid w-[41px] place-items-center border-b-2 border-[#f09aac] bg-[#6a4c5a]"><ReaperLogo className="size-[18px]" /></button>
      <button aria-label="OBS Studio" className="mx-1 grid w-[34px] place-items-center border-b-2 border-[#f09aac]">
        <svg viewBox="0 0 20 20" className="size-5">
          <circle cx="10" cy="10" r="9" fill="#26262a" stroke="#e8e8e8" strokeWidth="1.300" />
          <path d="M6 4c0 4 2 5.500 5 5.500M16 8c-3-2-5-1-6 2M5 14c3 1.500 6 0 6-4" fill="none" stroke="#e8e8e8" strokeWidth="2" />
          <circle cx="14.500" cy="14.500" r="4.500" fill="#ee1111" />
        </svg>
      </button>
      <div className="ml-auto flex items-center text-[10px] leading-[15px]">
        <button aria-label="Скрытые значки"><svg viewBox="0 0 12 8" className="h-2 w-3" fill="none" stroke="#fff" strokeWidth="1.300"><path d="M1 7l5-5 5 5" /></svg></button>
        <button aria-label="Громкость" className="ml-[7px]"><svg viewBox="0 0 14 12" className="h-3 w-[14px]" fill="none" stroke="#fff"><path d="M1 4h2l3-3v10L3 8H1zM8 4c1 1 1 3 0 4M10 2.500c2 2 2 5 0 7" /><path d="M12 1c2.500 3 2.500 7 0 10" stroke="#777" /></svg></button>
        <button aria-label="Сеть" className="ml-[7px]"><svg viewBox="0 0 15 12" className="h-3 w-[15px]" fill="none" stroke="#fff" strokeWidth="1.200"><path d="M3.500 1.500h10.500v7H3.500M6 11.500h6M9 8.500v3M2.500 4v7.500" /><path d="M0 1h4v3H0z" fill="#fff" stroke="none" /></svg></button>
        <button className="ml-[8px]">РУС</button>
        <div className="ml-[9px] text-center"><div>16:31</div><div>21.03.2026</div></div>
        <button aria-label="Уведомления" className="relative ml-[14px]">
          <svg viewBox="0 0 20 20" className="size-5"><path d="M0 1h14v11H8l-3 3v-3H0z" fill="#fff" /><path d="M3 4h8M3 6.500h8M3 9h5" stroke="#222" /><circle cx="13.500" cy="13.500" r="6" fill="#262a2c" stroke="#8a8a8a" /></svg>
          <span className="absolute right-1 bottom-0 text-[10px] leading-[13px]">1</span>
        </button>
        <span className="ml-[10px] h-8 w-px bg-[#666]" />
        <span className="w-1" />
      </div>
    </footer>
  );
}

const columns = ["Направ.", "Медиаэлемент", "Поз", "Offs", "Пере...", "Выро...", "Результат"];

function Check({ id, text }: { id: string; text: string }) {
  return (
    <>
      <input id={id} type="checkbox" className="size-[11px] shrink-0 appearance-none border border-[#444] bg-white checked:bg-[#444]" />
      <label htmlFor={id} className="ml-[3px] whitespace-nowrap">{text}</label>
    </>
  );
}

function DropArrow() {
  return (
    <svg viewBox="0 0 8 8" className="pointer-events-none absolute right-[3px] size-2" fill="none" stroke="#666"><path d="M1 2.500l3 3 3-3" /></svg>
  );
}

function PhaseDialog() {
  return (
    <div role="dialog" aria-labelledby="phase-title" className="absolute top-[197px] left-[340px] w-[600px] border-b border-[#111] bg-[#a9b1ae] font-['Liberation_Sans',sans-serif] text-[9px] leading-3 text-[#3c4140] shadow-[0_2px_6px_#0008]">
      <div className="flex h-6 items-center bg-white px-[6px] font-['Open_Sans',sans-serif]">
        <h2 id="phase-title" className="flex-1 text-[10px] text-[#555]">Выравнивание фазы</h2>
        <button aria-label="Закрепить" className="mr-6 mb-1">
          <svg viewBox="0 0 12 12" className="size-3" fill="none" stroke="#aaa"><path d="M2 1h3v3L2 7h7L7 4V1h3M6 7v4M1 3h3M8 8l3 1" strokeDasharray="1.500 .7" /></svg>
        </button>
        <button aria-label="Закрыть окно" className="-mr-[5px] grid size-4 place-items-center bg-[#b8324a]">
          <svg viewBox="0 0 6 6" className="size-[6px]" stroke="#fff" strokeWidth="1.500"><path d="M.5.5l5 5M5.500.5l-5 5" /></svg>
        </button>
      </div>
      <div className="flex items-center pt-[10px] pl-[3px]">
        <label htmlFor="adjust" className="w-[74px] whitespace-nowrap">Отрегулируйте:</label>
        <div className="relative mr-[2px] flex items-center">
          <select id="adjust" className="h-[15px] w-[71px] appearance-none bg-[#dcdfde] pl-[3px]"><option>Позиция</option></select>
          <DropArrow />
        </div>
        <Check id="invert" text="Разрешить инвертирование фазы" />
        <span className="w-3" />
        <Check id="selection" text="Использовать выделенное" />
        <label htmlFor="max" className="ml-[11px] w-[82px]">Максимальная</label>
        <input id="max" defaultValue="50" className="h-4 w-[42px] border border-[#8a8f8d] bg-[#dfe2e1] pl-px outline-none" />
        <span className="ml-[2px]">мс</span>
      </div>
      <table className="mt-2 ml-[10px] h-[176px] w-[573px] table-fixed border-collapse bg-[#dcdfde] text-[#333]">
        <colgroup>
          <col className="w-12" /><col className="w-40" /><col className="w-10" /><col className="w-10" /><col className="w-10" /><col className="w-10" /><col />
        </colgroup>
        <thead>
          <tr className="h-[15px] bg-white text-[#555]">
            {columns.map((c, i) => (
              <th key={c} className={`overflow-hidden py-0 font-normal whitespace-nowrap ${i === 2 || i === 3 ? "pr-1 text-right" : i === 4 || i === 5 ? "pl-[7px] text-left" : "pl-1 text-left"} ${i < 6 ? "border-r border-[#d5d8d7]" : ""}`}>{c}</th>
            ))}
          </tr>
        </thead>
        <tbody>
          <tr className="h-[13px] bg-[#eef0ef]">
            {["Рефере...", "Track 2: 02-260321_1630.wav", "0:00.000", "0:02.400", "", "", ""].map((c, i) => (
              <td key={i} className={`overflow-hidden border-y border-[#b3b8b6] p-0 whitespace-nowrap ${i === 2 || i === 3 ? "pr-[3px] text-right" : "pl-[5px]"} ${i < 6 ? "border-r" : ""}`}>{c}</td>
            ))}
          </tr>
          {Array.from({ length: 11 }, (_, r) => (
            <tr key={r} className="h-[13px]">
              {columns.map((c, i) => <td key={c} className={`border-[#b9bdbc] p-0 ${r < 10 ? "border-b" : ""} ${i < 6 ? "border-r" : ""}`} />)}
            </tr>
          ))}
        </tbody>
      </table>
      <p className="pt-[9px] pl-[9px]">Несколько выделенных строк будут рассматриваться как один элемент ссылки</p>
      <div className="flex items-center pt-[6px] pr-[15px] pb-[9px] pl-[9px]">
        <button disabled className="mr-[5px] h-[17px] w-[78px] bg-[#bfc5c3] whitespace-nowrap text-[#8c9290]">Обновить список</button>
        <Check id="keep" text="Сохраняйте референсы" />
        <div className="relative ml-2 flex items-center">
          <select aria-label="Референсы" className="h-[15px] w-[158px] appearance-none bg-[#dcdfde] pl-px text-[9px]"><option>РќР°СЃС‚СЂРѕР№С‚Рµ РІСЃРµ СЌ</option></select>
          <DropArrow />
        </div>
        <button disabled className="ml-auto h-[17px] w-[74px] bg-[#bfc5c3] text-[#8c9290]">Рассчитать</button>
        <button disabled className="ml-[6px] h-[17px] w-[74px] bg-[#bfc5c3] text-[#8c9290]">Применить</button>
      </div>
    </div>
  );
}

export default function App() {
  return (
    <div className={`relative flex min-h-screen flex-col overflow-hidden bg-[#333333] ${ui}`}>
      <TitleBar />
      <main className="flex flex-1 flex-col">
        <div className="flex flex-1">
          <div className="flex w-[277px] shrink-0 flex-col">
            <Toolbar />
            <div className="mr-[5px] ml-px">
              <TrackPanel n={1} />
              <TrackPanel n={2} selected />
              <TrackPanel n={3} fxOff />
            </div>
            <button aria-label="Добавить дорожку" className="mt-[19px] ml-[126px] size-5">
              <svg viewBox="0 0 20 20" className="size-5" fill="none" stroke="#a0a0a0" strokeWidth="1.500"><circle cx="10" cy="10" r="9" /><path d="M5.500 10h9M10 5.500v9" /></svg>
            </button>
          </div>
          <Arrange />
          <VScroll />
        </div>
        <div className="flex h-[14px] items-center">
          <div className="mr-[7px] w-[272px] border-t border-[#555] pl-px text-[8px] leading-[13px] whitespace-nowrap text-[#999]">
            02-260321_1630.wav [начало] 1.1.00 [конец] 13.3.12 [len] 12.2.12
          </div>
          <button aria-label="Влево" className="flex"><RoundArrow turn="-rotate-90" /></button>
          <div className="ml-1 flex h-2 w-4 items-center justify-between rounded-full bg-[#777] px-[3px]"><span className="size-1 bg-[#222]" /><span className="size-1 bg-[#222]" /></div>
          <div className="ml-auto flex items-center gap-[5px] pr-[18px]">
            <button aria-label="Вправо" className="flex"><RoundArrow turn="rotate-90" /></button>
            <button aria-label="Увеличить" className="flex"><Sign plus /></button>
            <button aria-label="Уменьшить" className="ml-1 flex"><Sign /></button>
          </div>
        </div>
        <Transport />
        <div className="flex h-[223px] items-stretch gap-1">
          <Master />
          <div className="flex w-[177px]">{strips.map((s) => <Strip key={s.n} s={s} />)}</div>
        </div>
        <div className="flex h-3 items-center bg-[#3c3c3c] pl-[3px]">
          <span className="mr-[3px] h-2 w-px bg-[#ddd]" />
          <button className="flex h-3 items-center gap-[3px] bg-[#808b88] pr-2 pl-[5px] text-[8px] leading-3 font-bold text-[#1d2220] [clip-path:polygon(0_0,100%_0,calc(100%-5px)_100%,4px_100%)]">
            <svg viewBox="0 0 8 8" className="size-2" fill="none" stroke="currentColor"><path d="M.5.5h7v7h-7zM2.500 2.500l3 3M5.500 2.500l-3 3" /></svg>
            Микшер
          </button>
        </div>
      </main>
      <Taskbar />
      <PhaseDialog />
      <svg viewBox="0 0 12 18" className="pointer-events-none absolute top-[607px] left-[784px] h-[15px] w-[10px]"><path d="M1 1v13l3-3 2.500 5.500 2-1L6.500 10H11z" fill="#fff" stroke="#111" /></svg>
    </div>
  );
}
